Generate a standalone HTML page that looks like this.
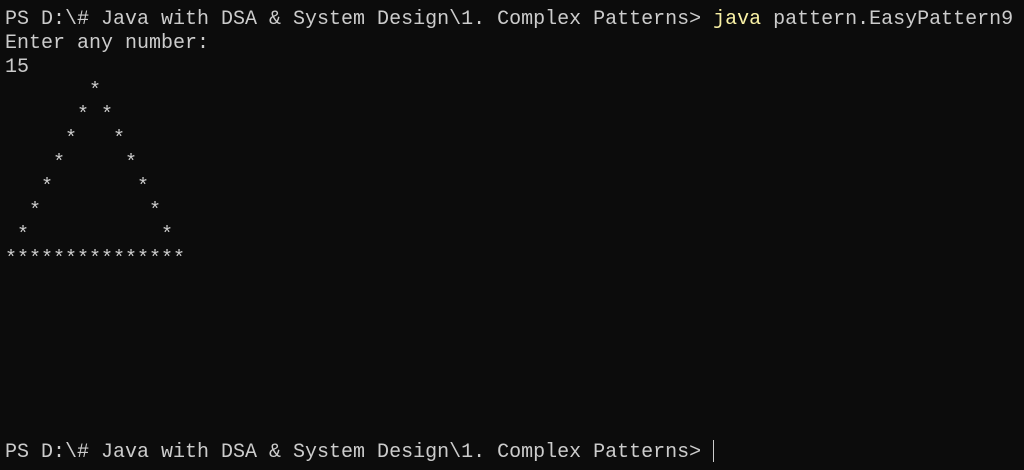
<!DOCTYPE html>
<html><head><meta charset="utf-8"><style>
html,body{margin:0;padding:0;background:#0c0c0c;width:1024px;height:470px;overflow:hidden}
pre{margin:0;position:absolute;left:5px;top:8px;font-family:"Liberation Mono",monospace;font-size:20px;line-height:24px;color:#cccccc;white-space:pre}
.y{color:#f9f1a5}
.cur{display:inline-block;width:1px;height:22px;background:#cccccc;vertical-align:-5px}
</style></head><body><pre>PS D:\# Java with DSA &amp; System Design\1. Complex Patterns&gt; <span class="y">java</span> pattern.EasyPattern9
Enter any number:
15
       *
      * *
     *   *
    *     *
   *       *
  *         *
 *           *
***************







PS D:\# Java with DSA &amp; System Design\1. Complex Patterns&gt; <span class="cur"></span></pre></body></html>
